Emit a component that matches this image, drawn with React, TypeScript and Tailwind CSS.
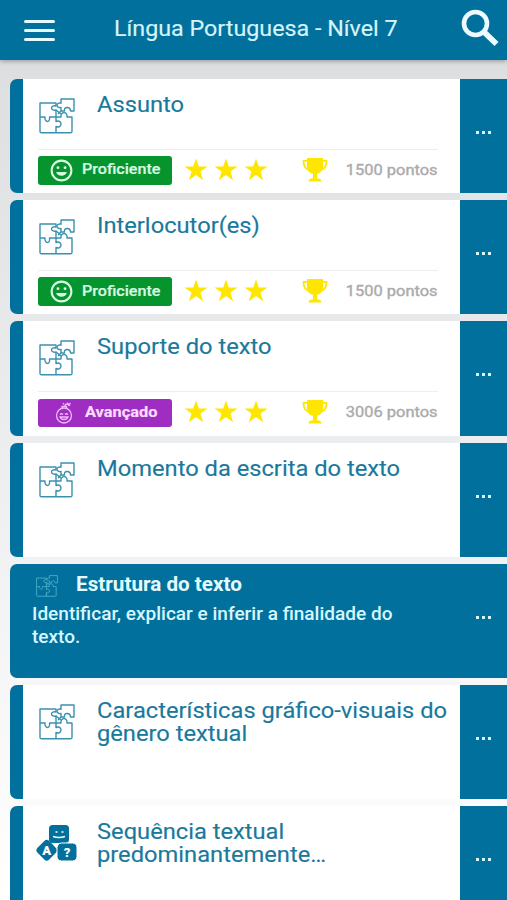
import type { ReactNode } from "react";

function Puzzle({ className }: { className: string }) {
  return (
    <svg viewBox="0 0 36 36" className={className} fill="none" stroke="currentColor" strokeWidth="1.4" strokeLinejoin="round">
      <path d="M1 5H17V8C14.500 7.500 12.500 8 12.500 10C12.500 12 15 12.500 17 12V19H10.500C11 21.500 10 23.500 8.500 23.500C7 23.500 5.500 21.500 6 19H1Z" />
      <path d="M1 19V33.500Q1 34.800 2.500 34.800H17V30.500M17 19V23.500C19 22.500 22 23 22 26C22 29 19 29.500 17 28.500V34.800H31.500Q33 34.800 33 33.500V19H28C28.500 16.500 27 14.500 25 14.500C23 14.500 21.500 16.500 22 19H17" />
      <path d="M22 1H35V13H31.500C31.500 11 30 9.500 28 9.500C26 9.500 25 11 25.500 13H22V9.500C20 10 18 9 18 7.300C18 5.500 20 4.500 22 5.200Z" />
      <path d="M17 12L22 16M22 13L19 16" />
    </svg>
  );
}

function Blocks() {
  return (
    <svg viewBox="0 0 42 38" className="h-[38px] w-[42px] text-[#02709d]" fill="currentColor">
      <rect x="14" y="1" width="20" height="18" rx="3.500" />
      <path d="M20.500 8h2M26.500 8h2M18 12.500Q24 14.500 30 12.500" stroke="#fff" strokeWidth="1.500" fill="none" />
      <rect x="3.500" y="18" width="16.500" height="16.500" rx="3.500" transform="rotate(45 11.750 26.250)" />
      <rect x="22" y="19" width="20" height="18" rx="4.500" stroke="#fff" strokeWidth="1" />
      <path d="M18 20.500h6l-3 3.500z" fill="#fff" />
      <text x="11.700" y="30.500" textAnchor="middle" className="font-['Roboto',sans-serif] text-[13px] font-black" fill="#fff">A</text>
      <text x="32" y="32.500" textAnchor="middle" className="font-['Roboto',sans-serif] text-[13px] font-black" fill="#fff">?</text>
    </svg>
  );
}

function Smile() {
  return (
    <svg viewBox="0 0 24 24" className="size-[23px] shrink-0" fill="none" stroke="currentColor" strokeWidth="2.2">
      <circle cx="12" cy="12" r="10.300" />
      <path d="M6.500 13.500h11c-.8 5.300-10.200 5.300-11 0z" fill="currentColor" stroke="none" />
      <circle cx="8.300" cy="9" r="1.500" fill="currentColor" stroke="none" />
      <circle cx="15.700" cy="9" r="1.500" fill="currentColor" stroke="none" />
    </svg>
  );
}

function Bomb() {
  return (
    <svg viewBox="0 0 18 22" className="h-[22px] w-[18px] shrink-0" fill="none" stroke="#f0b8fa" strokeWidth="1.300">
      <circle cx="9" cy="13.500" r="7.500" />
      <path d="M7 6V4.500h4.500V6M10 4.500C10 2 12 1.500 13 2.500M12 .8l3 3M15.500 1l-2.500 2.500M8 1l1 1.500" />
      <path d="M5 12.500q1.500-1.500 3 0M10 12.500q1.500-1.500 3 0M5 15h8q-1 2.500-4 2.500T5 15z" />
    </svg>
  );
}

function Star() {
  return (
    <svg viewBox="0 0 24 24" className="size-[24px]" fill="#ffe600">
      <path d="M12 .5l2.800 8h8.700l-7 5 2.600 8.700L12 17.100l-7.100 5.100 2.600-8.700-7-5h8.700z" />
    </svg>
  );
}

function Trophy() {
  return (
    <svg viewBox="0 0 26 24" className="h-[24px] w-[26px]" fill="#ffe600">
      <path d="M5 0h16v8.500c0 4-2.500 6.500-6 7.300v4.500c3 .2 4.500 1.200 4.500 3.200h-13c0-2 1.500-3 4.500-3.200v-4.500c-3.500-.8-6-3.300-6-7.300z" />
      <path d="M6 2.800H1.500C1.500 8 4 11.500 8 12M20 2.800h4.500C24.500 8 22 11.500 18 12" fill="none" stroke="#ffe600" strokeWidth="1.800" />
    </svg>
  );
}

function Score({ level, points }: { level: "Proficiente" | "Avançado"; points: number }) {
  const advanced = level === "Avançado";
  return (
    <div className="mb-[8.500px] ml-[15px] mt-auto flex h-[36px] w-[400px] items-end border-t border-[#eeeeee]">
      <div className={`flex h-[28.500px] w-[134px] items-center rounded-[3px] text-[15.500px] ${advanced ? "bg-[#9f2dc2] pl-[17px] text-[#fbdcff]" : "bg-[#06942f] pl-[12px] text-[#d8fae2]"}`}>
        {advanced ? <Bomb /> : <Smile />}
        <span className={`origin-left pb-[1px] [-webkit-text-stroke:0.2px_currentColor] ${advanced ? "ml-[12px] scale-x-[1.055] font-bold" : "ml-[9px] scale-x-[1.04] font-medium"}`}>{level}</span>
      </div>
      <div className="mb-[3px] ml-[12px] flex gap-[6px]">
        <Star />
        <Star />
        <Star />
      </div>
      <div className="mb-[3px] ml-[34px]">
        <Trophy />
      </div>
      <span className="mb-[5px] ml-auto origin-right scale-x-[1.06] whitespace-nowrap text-[15.500px] leading-[20px] text-[#ababab] [-webkit-text-stroke:0.4px_#ababab]">{points} pontos</span>
    </div>
  );
}

function Dots() {
  return (
    <div className="flex w-[47px] shrink-0 items-center justify-center gap-[3px] bg-[#02709d]">
      <i className="mb-[7px] size-[3px] bg-[#d5f8ff]" />
      <i className="mb-[7px] size-[3px] bg-[#d5f8ff]" />
      <i className="mb-[7px] size-[3px] bg-[#d5f8ff]" />
    </div>
  );
}

function Card({ title, icon, children }: { title: ReactNode; icon?: ReactNode; children?: ReactNode }) {
  return (
    <section className="flex h-[114.200px] shrink-0 overflow-hidden rounded-l-[7px] bg-[#02709d]">
      <div className="ml-[13px] flex min-w-0 flex-1 flex-col bg-white">
        <div className="flex">
          <div className="w-[74px] shrink-0 pl-[12px] pt-[18px]">
            {icon ?? <Puzzle className="ml-[4px] mt-[1px] size-[36px] text-[#3b91ae]" />}
          </div>
          <h2 className="origin-left scale-x-[1.077] whitespace-nowrap pt-[14px] text-[22px] leading-[23px] text-[#19799c] [-webkit-text-stroke:0.150px_#19799c]">{title}</h2>
        </div>
        {children}
      </div>
      <Dots />
    </section>
  );
}

export default function App() {
  return (
    <div className="flex h-[900px] w-[507px] flex-col overflow-hidden bg-linear-to-b from-[#dadcde] via-[#f0f1f2] via-60% to-white font-['Roboto',sans-serif]">
      <header className="flex h-[60px] shrink-0 items-center bg-[#02709d] text-[#d5f5fb] shadow-[0_1px_5px_rgba(0,0,0,0.35)]">
        <div className="ml-[24px] mt-[1px] flex w-[31px] flex-col gap-[6px]">
          <i className="h-[3px] rounded bg-[#e5fbff]" />
          <i className="h-[3px] rounded bg-[#e5fbff]" />
          <i className="h-[3px] rounded bg-[#e5fbff]" />
        </div>
        <h1 className="ml-[59px] origin-left scale-x-[1.083] whitespace-nowrap pb-[1px] text-[21.500px] [-webkit-text-stroke:0.150px_#d5f5fb]">Língua Portuguesa - Nível 7</h1>
        <svg viewBox="0 0 38 38" className="mb-[5px] ml-auto mr-[8px] size-[38px]" fill="none" stroke="#edfdff">
          <circle cx="14.500" cy="14.500" r="11.500" strokeWidth="4.600" />
          <path d="M22 22l13.500 13" strokeWidth="5.800" />
        </svg>
      </header>
      <main className="mt-[19px] flex flex-col gap-[7px] pl-[10px]">
        <Card title="Assunto"><Score level="Proficiente" points={1500} /></Card>
        <Card title="Interlocutor(es)"><Score level="Proficiente" points={1500} /></Card>
        <Card title="Suporte do texto"><Score level="Avançado" points={3006} /></Card>
        <Card title="Momento da escrita do texto" />
        <section className="flex h-[114.200px] shrink-0 rounded-l-[7px] bg-[#02709d] text-[#d5f8ff]">
          <div className="flex-1 pl-[22px] pt-[10px]">
            <div className="flex items-center">
              <Puzzle className="ml-[4px] mt-[1px] size-[22px] text-[#4fb0cb]" />
              <h2 className="ml-[18px] origin-left scale-x-[1.06] text-[19.500px] font-bold leading-[22px] text-[#e2fbff]">Estrutura do texto</h2>
            </div>
            <p className="mt-[5px] origin-left scale-x-[1.057] whitespace-nowrap text-[18px] font-medium leading-[23px]">Identificar, explicar e inferir a finalidade do<br />texto.</p>
          </div>
          <Dots />
        </section>
        <Card title={<>Características gráfico-visuais do<br />gênero textual</>} />
        <Card icon={<Blocks />} title={<>Sequência textual<br />predominantemente…</>} />
      </main>
    </div>
  );
}
